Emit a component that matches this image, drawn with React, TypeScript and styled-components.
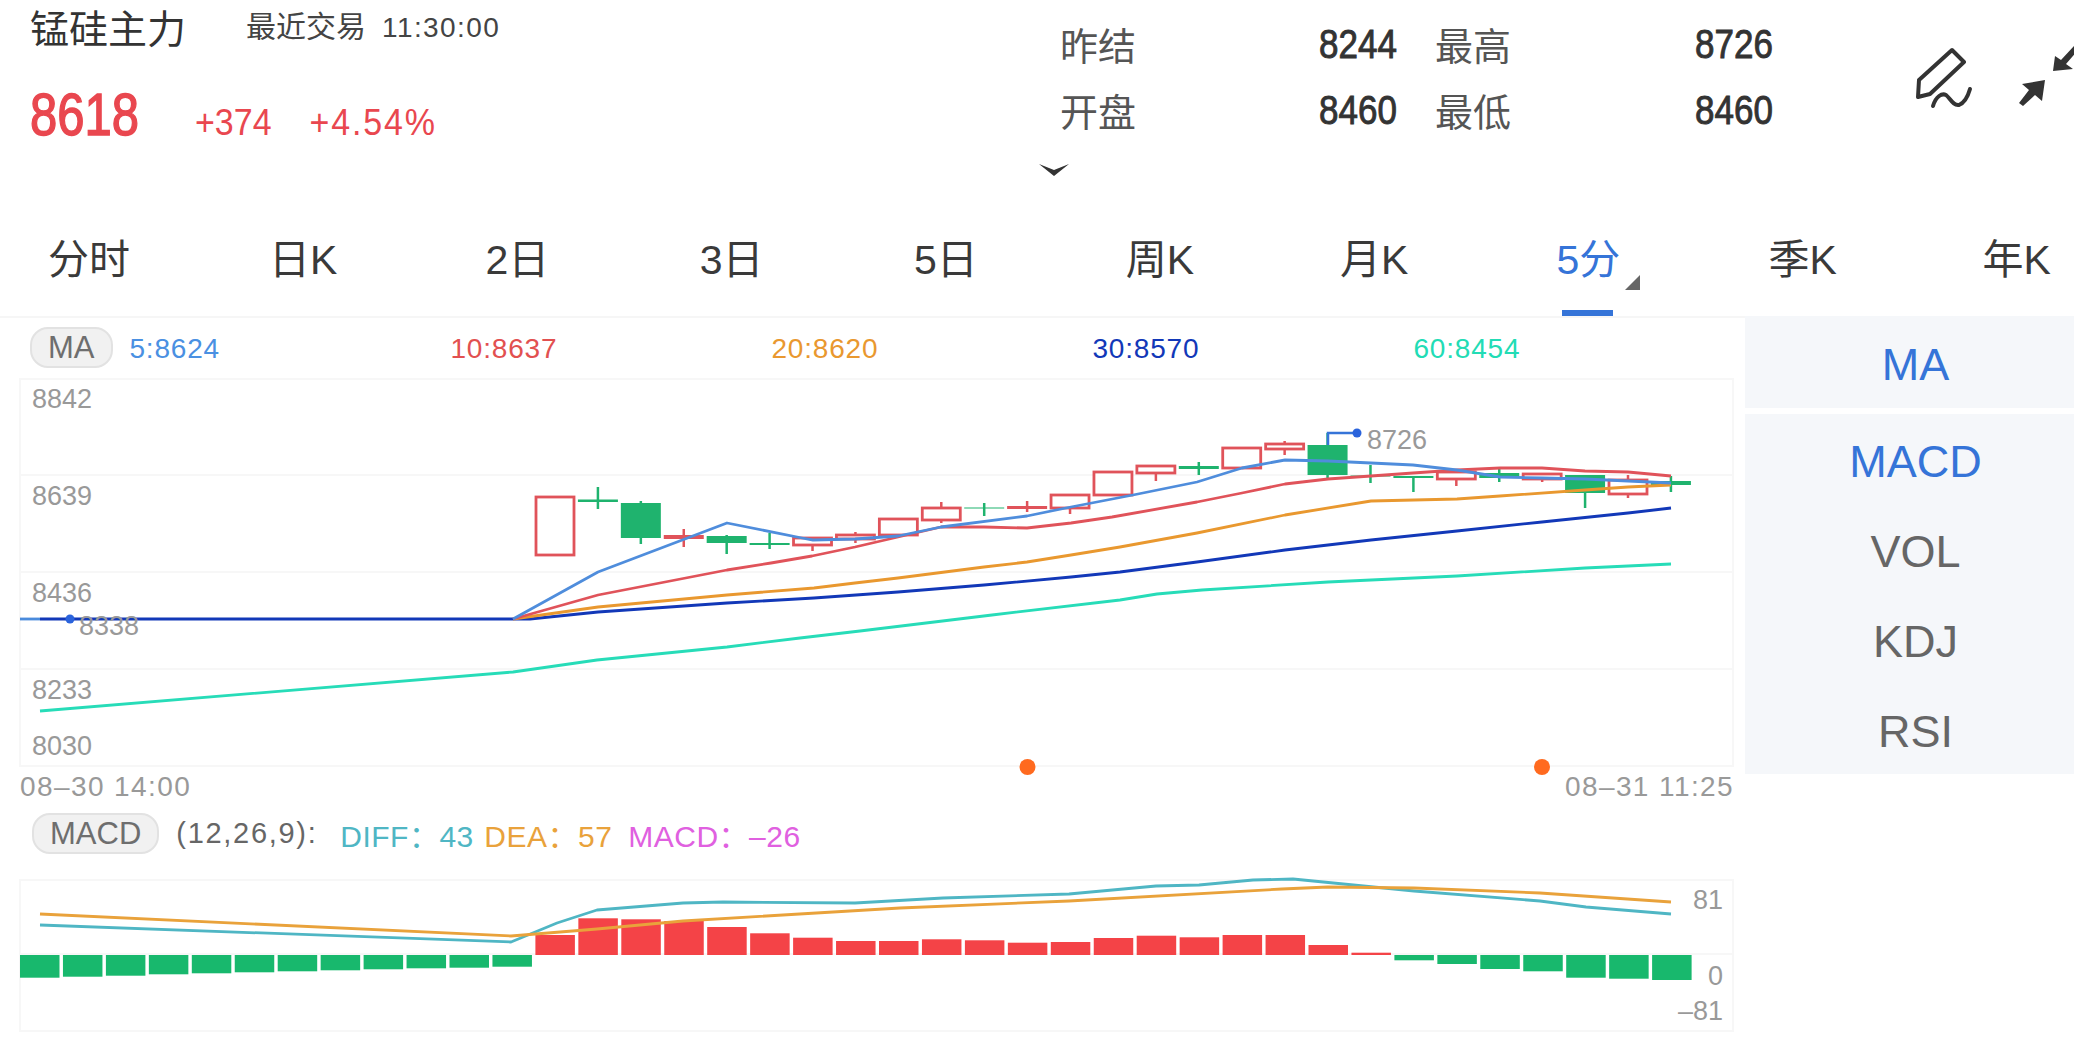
import React from "react";
import styled, { createGlobalStyle } from "styled-components";

const GlobalStyle = createGlobalStyle`
  html, body {
    margin: 0;
    background: #fff;
    font-family: "Liberation Sans", "Noto Sans CJK SC", sans-serif;
  }
  #root {
    width: 2074px;
    height: 1047px;
    overflow: hidden;
  }
`;

const Page = styled.div`
  width: 2074px;
  height: 1047px;
  overflow: hidden;
  background: #fff;
`;

// header
const Header = styled.header`
  display: flex;
  height: 212px;
`;

const Quote = styled.div`
  flex: none;
  width: 1060px;
  padding-left: 30px;
  box-sizing: border-box;
`;

const TitleRow = styled.div`
  display: flex;
  align-items: center;
  height: 54px;
`;

const Title = styled.h1`
  margin: -3px 60px 0 0;
  font-size: 39px;
  font-weight: 400;
  color: #333;
`;

const TradeTime = styled.span`
  font-size: 30px;
  color: #444;
  margin-top: -7px;
`;

const Clock = styled.span`
  margin-left: 16px;
  font-size: 28px;
  letter-spacing: 1.4px;
`;

const PriceRow = styled.div`
  display: flex;
  align-items: baseline;
  margin-top: 36px;
  color: #e9474f;
`;

const Price = styled.span`
  display: inline-block;
  margin-right: 56px;
  font-size: 49px;
  -webkit-text-stroke: 1.2px #e9474f;
  transform: scaleY(1.2);
  transform-origin: 50% 80%;
`;

const Change = styled.span<{ $spacing?: number }>`
  display: inline-block;
  margin-right: 38px;
  font-size: 34px;
  letter-spacing: ${(p) => p.$spacing ?? 0}px;
  transform: scaleY(1.1);
  transform-origin: 50% 80%;
`;

const StatsColumn = styled.div`
  flex: none;
  width: 715px;
  padding-top: 10px;
`;

const StatsGrid = styled.div`
  display: grid;
  grid-template-columns: 259px 116px 260px 80px;
  grid-auto-rows: 66px;
  align-items: center;
`;

const StatLabel = styled.span`
  font-size: 38px;
  color: #555;
`;

const StatValue = styled.span`
  display: inline-block;
  padding-top: 2px;
  font-size: 35px;
  color: #333;
  -webkit-text-stroke: 0.8px #333;
  transform: scaleY(1.18);
`;

const Chevron = styled.svg`
  display: block;
  margin: 21px 0 0 -21px;
`;

const Tools = styled.div`
  display: flex;
  padding: 45px 0 0 141px;
  gap: 45px;
`;

// period tabs
const Tabs = styled.nav`
  display: grid;
  grid-template-columns: repeat(10, 214.2px);
  margin-left: -18px;
  height: 104px;
`;

const Tab = styled.div<{ $active?: boolean }>`
  position: relative;
  display: flex;
  justify-content: center;
  padding-top: 24px;
  font-size: 41px;
  line-height: 48px;
  color: ${(p) => (p.$active ? "#3574d8" : "#3a3a3a")};
`;

const TabMark = styled.span`
  position: absolute;
  left: 81px;
  bottom: 0;
  width: 51px;
  height: 6px;
  background: #3574d8;
`;

const TabCorner = styled.span`
  position: absolute;
  left: 144px;
  top: 63px;
  width: 0;
  height: 0;
  border-left: 15px solid transparent;
  border-bottom: 15px solid #666;
`;

// body
const Body = styled.main`
  display: flex;
`;

const ChartColumn = styled.section`
  width: 1745px;
  border-top: 2px solid #f6f6f6;
`;

const LegendRow = styled.div<{ $top: number; $bottom: number }>`
  display: flex;
  align-items: center;
  height: 41px;
  margin: ${(p) => p.$top}px 0 ${(p) => p.$bottom}px 30px;
  font-size: 28px;
`;

const Pill = styled.span<{ $left: number }>`
  display: flex;
  align-items: center;
  justify-content: center;
  box-sizing: border-box;
  height: 41px;
  padding: 0 16px;
  margin-left: ${(p) => p.$left}px;
  border: 2px solid #e2e2e2;
  border-radius: 18px;
  background: #f1f1f1;
  font-size: 31px;
  color: #6e6e6e;
`;

const MaValue = styled.span<{ $color: string }>`
  width: 321px;
  padding-top: 2px;
  font-size: 28px;
  letter-spacing: 0.8px;
  color: ${(p) => p.$color};
`;

const MaValues = styled.div`
  display: flex;
  margin-left: 17px;
`;

const MacdParams = styled.span`
  margin-left: 17px;
  width: 164px;
  font-size: 29px;
  letter-spacing: 1.7px;
  color: #666;
`;

const MacdValue = styled.span<{ $color: string; $width: number }>`
  width: ${(p) => p.$width}px;
  font-size: 30px;
  letter-spacing: 0.5px;
  white-space: nowrap;
  color: ${(p) => p.$color};
`;

const DateRow = styled.div`
  display: flex;
  justify-content: space-between;
  height: 30px;
  padding: 0 11px 0 20px;
  font-size: 28px;
  line-height: 30px;
  letter-spacing: 1.4px;
  color: #999;
`;

const ChartSvg = styled.svg`
  display: block;
  overflow: visible;
`;

const Panel = styled.aside`
  width: 329px;
`;

const PanelBox = styled.div<{ $gap?: number }>`
  margin-top: ${(p) => p.$gap ?? 0}px;
  background: #f5f7fa;
`;

const PanelItem = styled.div<{ $active?: boolean; $height: number }>`
  height: ${(p) => p.$height}px;
  line-height: ${(p) => p.$height + 6}px;
  padding-left: 12px;
  text-align: center;
  font-size: 45px;
  color: ${(p) => (p.$active ? "#3574d8" : "#666")};
`;

const RED = "#e0535a";
const GREEN = "#1fb36e";

// bodyTop, bodyBottom, wickTop, wickBottom, kind
type Candle = [number, number, number, number, "hollow" | "red" | "green"];

const candles: Candle[] = [
  [497, 555, 497, 555, "hollow"],
  [499.5, 502, 487, 509, "green"],
  [503, 538, 501, 544, "green"],
  [535, 539, 529, 547, "red"],
  [536, 543, 535, 554, "green"],
  [543, 545, 533, 549, "green"],
  [538, 545, 537, 551, "hollow"],
  [535, 539, 532, 543, "hollow"],
  [519, 535, 519, 535, "hollow"],
  [508, 520, 502, 523, "hollow"],
  [507.5, 508.5, 503, 516, "green"],
  [506, 509, 501, 512, "red"],
  [495, 508, 495, 514, "hollow"],
  [472, 495, 472, 495, "hollow"],
  [466, 473, 466, 481, "hollow"],
  [466, 469, 462, 475, "green"],
  [448, 468, 448, 468, "hollow"],
  [444, 449, 441, 455, "hollow"],
  [445, 475, 433, 478, "green"],
  [475.5, 476.5, 465, 483, "green"],
  [476, 478, 476, 492, "green"],
  [472, 479, 472, 486, "hollow"],
  [473, 478, 468, 482, "green"],
  [474, 479, 474, 482, "hollow"],
  [475, 493, 475, 508, "green"],
  [480, 494, 475, 498, "hollow"],
  [481, 485, 476, 492, "green"],
];

const ma5 = "513,619 598,572 727,523 802,538 813,540 855,539 898,536 941,527 1027,516 1071,507 1133,495 1197,482 1242,468 1285,460 1328,461 1371,463 1413,465 1457,470 1500,477 1542,478 1585,479 1628,481 1671,483";
const ma10 = "513,619 598,595 727,570 771,563 812,556 855,547 898,537 941,527 984,527 1027,528 1071,523 1112,517 1197,502 1242,493 1285,484 1328,479 1371,476 1413,473 1457,470 1500,468 1542,468 1585,471 1628,472 1671,476";
const ma20 = "513,619 598,607 727,595 814,588 855,583 898,578 984,567 1027,562 1071,555 1120,547 1197,533 1285,515 1371,501 1457,499 1500,496 1585,490 1628,487 1671,485";
const ma30 = "40,619 530,619 598,612 727,603 814,598 898,592 984,585 1071,577 1120,572 1197,562 1285,550 1371,540 1457,531 1542,522 1628,513 1671,508";
const ma60 = "40,711 513,672 597,660 727,647 800,638 860,631 992,615 1120,600 1157,594 1202,590 1328,582 1457,576 1585,568 1671,564";

const greenBars = [977.7, 976.7, 975.7, 974.3, 973.3, 972.3, 971.3, 970.3, 969.3, 968.3, 967.7, 966.7];
const redBars = [935, 918.3, 919.3, 921, 927, 933.3, 937.7, 941, 941, 939.3, 940.3, 942.7, 942, 938, 935.7, 937.3, 935, 935, 945, 952.7];
const tailBars = [960.3, 964, 969, 971.3, 977.7, 978.7, 980];

const dea = "40,914 511,936 597,929 683,921 900,908 1069,901 1282,889 1328,887 1414,888 1540,893 1671,902";
const diff = "40,925 511,942 557,923 597,910 683,903 723,902 855,903 943,898 1069,894 1156,886 1199,885 1253,880 1293,879 1414,891 1540,901 1586,907 1671,914";

const axisStyle = { fontFamily: "'Liberation Sans', sans-serif", fontSize: 27, fill: "#999" };

function PriceChart() {
  return (
    <ChartSvg width={1745} height={394} viewBox="0 378 1745 394">
      <g stroke="#f7f7f7" strokeWidth="2" fill="none">
        <rect x="20" y="379" width="1713" height="387" />
        <line x1="20" y1="475" x2="1733" y2="475" />
        <line x1="20" y1="572" x2="1733" y2="572" />
        <line x1="20" y1="669" x2="1733" y2="669" />
      </g>
      {[
        ["8842", 408],
        ["8639", 505],
        ["8436", 602],
        ["8233", 699],
        ["8030", 755],
      ].map(([label, y]) => (
        <text key={label} x="32" y={y} style={axisStyle}>
          {label}
        </text>
      ))}
      {candles.map(([top, bottom, wickTop, wickBottom, kind], i) => {
        const x = 555 + i * 42.92;
        const color = kind === "green" ? GREEN : RED;
        return (
          <g key={i}>
            <line x1={x} y1={wickTop} x2={x} y2={wickBottom} stroke={color} strokeWidth="2.5" />
            {kind === "hollow" ? (
              <rect x={x - 19} y={top} width={38} height={bottom - top} fill="#fff" stroke={color} strokeWidth="2.8" />
            ) : (
              <rect x={x - 20} y={top} width={40} height={bottom - top} fill={color} />
            )}
          </g>
        );
      })}
      <line x1="20" y1="619" x2="40" y2="619" stroke="#4a8bdc" strokeWidth="2.8" />
      <g fill="none" strokeWidth="2.8" strokeLinejoin="round">
        <polyline points={ma60} stroke="#27dcb8" />
        <polyline points={ma30} stroke="#1238b8" />
        <polyline points={ma20} stroke="#e9982f" />
        <polyline points={ma10} stroke="#e0535a" />
        <polyline points={ma5} stroke="#4f8ddc" />
      </g>
      <circle cx="70" cy="619" r="4.5" fill="#2a63dc" />
      <text x="79" y="635" style={axisStyle}>
        8338
      </text>
      <polyline points="1328,445 1328,433 1357,433" fill="none" stroke="#3574d8" strokeWidth="2.5" />
      <circle cx="1357" cy="433" r="4.5" fill="#2a63dc" />
      <text x="1367" y="449" style={axisStyle}>
        8726
      </text>
      <circle cx="1027.5" cy="767" r="8" fill="#ff6a1f" />
      <circle cx="1542" cy="767" r="8" fill="#ff6a1f" />
    </ChartSvg>
  );
}

function MacdChart() {
  const barX = (i: number) => 20 + i * 42.95;
  return (
    <ChartSvg width={1745} height={156} viewBox="0 879 1745 156">
      <g stroke="#f7f7f7" strokeWidth="2" fill="none">
        <rect x="20" y="880" width="1713" height="151" />
        <line x1="20" y1="954" x2="1733" y2="954" />
      </g>
      {greenBars.map((y, i) => (
        <rect key={i} x={barX(i)} y="955" width="39.5" height={y - 955} fill="#18b86d" />
      ))}
      {redBars.map((y, i) => (
        <rect key={i} x={barX(i + 12)} y={y} width="39.5" height={955 - y} fill="#f44347" />
      ))}
      {tailBars.map((y, i) => (
        <rect key={i} x={barX(i + 32)} y="955" width="39.5" height={y - 955} fill="#18b86d" />
      ))}
      <g fill="none" strokeWidth="2.8" strokeLinejoin="round">
        <polyline points={diff} stroke="#4fb6c4" />
        <polyline points={dea} stroke="#e9a23b" />
      </g>
      <g style={axisStyle} textAnchor="end">
        <text x="1723" y="909">81</text>
        <text x="1723" y="985">0</text>
        <text x="1723" y="1020">–81</text>
      </g>
    </ChartSvg>
  );
}

const tabs = ["分时", "日K", "2日", "3日", "5日", "周K", "月K", "5分", "季K", "年K"];

const maValues = [
  { text: "5:8624", color: "#4a90e2" },
  { text: "10:8637", color: "#e25050" },
  { text: "20:8620", color: "#e9982f" },
  { text: "30:8570", color: "#1238b8" },
  { text: "60:8454", color: "#22dcb5" },
];

export default function App() {
  return (
    <Page>
      <GlobalStyle />
      <Header>
        <Quote>
          <TitleRow>
            <Title>锰硅主力</Title>
            <TradeTime>
              最近交易
              <Clock>11:30:00</Clock>
            </TradeTime>
          </TitleRow>
          <PriceRow>
            <Price>8618</Price>
            <Change>+374</Change>
            <Change $spacing={1.8}>+4.54%</Change>
          </PriceRow>
        </Quote>
        <StatsColumn>
          <StatsGrid>
            <StatLabel>昨结</StatLabel>
            <StatValue>8244</StatValue>
            <StatLabel>最高</StatLabel>
            <StatValue>8726</StatValue>
            <StatLabel>开盘</StatLabel>
            <StatValue>8460</StatValue>
            <StatLabel>最低</StatLabel>
            <StatValue>8460</StatValue>
          </StatsGrid>
          <Chevron width="30" height="13" viewBox="0 0 30 13">
            <path d="M0 1 L15 7 L30 1 L15 13 Z" fill="#333" />
          </Chevron>
        </StatsColumn>
        <Tools>
          <svg width="58" height="64" viewBox="1916 45 58 64">
            <path d="M1952 50 L1964 62 L1930 94 L1918 97 L1919 80 Z" fill="none" stroke="#333" strokeWidth="4" strokeLinejoin="round" />
            <path d="M1933 106 C1936 96 1942 93 1946 95 C1950 98 1953 106 1959 105 C1964 103 1968 96 1970 89" fill="none" stroke="#333" strokeWidth="4" strokeLinecap="round" />
          </svg>
          <svg width="60" height="64" viewBox="2019 45 60 64" style={{ flexShrink: 0 }}>
            <path d="M2045 80 L2022 84 L2029 90 L2019 103 L2023 106 L2035 95 L2042 101 Z" fill="#333" />
            <path d="M2053 71 L2055 56 L2061 60 L2074 46 L2078 50 L2066 64 L2073 69 Z" fill="#333" />
          </svg>
        </Tools>
      </Header>

      <Tabs>
        {tabs.map((t, i) => (
          <Tab key={t} $active={i === 7}>
            {t}
            {i === 7 && (
              <>
                <TabCorner />
                <TabMark />
              </>
            )}
          </Tab>
        ))}
      </Tabs>

      <Body>
        <ChartColumn>
          <LegendRow $top={9} $bottom={10}>
            <Pill $left={0}>MA</Pill>
            <MaValues>
              {maValues.map((m) => (
                <MaValue key={m.text} $color={m.color}>
                  {m.text}
                </MaValue>
              ))}
            </MaValues>
          </LegendRow>
          <PriceChart />
          <DateRow>
            <span>08–30 14:00</span>
            <span>08–31 11:25</span>
          </DateRow>
          <LegendRow $top={11} $bottom={25}>
            <Pill $left={2}>MACD</Pill>
            <MacdParams>(12,26,9):</MacdParams>
            <MacdValue $color="#4fb6c4" $width={144}>DIFF：43</MacdValue>
            <MacdValue $color="#e9a23b" $width={144}>DEA：57</MacdValue>
            <MacdValue $color="#e060e0" $width={180}>MACD：–26</MacdValue>
          </LegendRow>
          <MacdChart />
        </ChartColumn>
        <Panel>
          <PanelBox>
            <PanelItem $active $height={92}>MA</PanelItem>
          </PanelBox>
          <PanelBox $gap={6}>
            <PanelItem $active $height={90}>MACD</PanelItem>
            <PanelItem $height={90}>VOL</PanelItem>
            <PanelItem $height={90}>KDJ</PanelItem>
            <PanelItem $height={90}>RSI</PanelItem>
          </PanelBox>
        </Panel>
      </Body>
    </Page>
  );
}
